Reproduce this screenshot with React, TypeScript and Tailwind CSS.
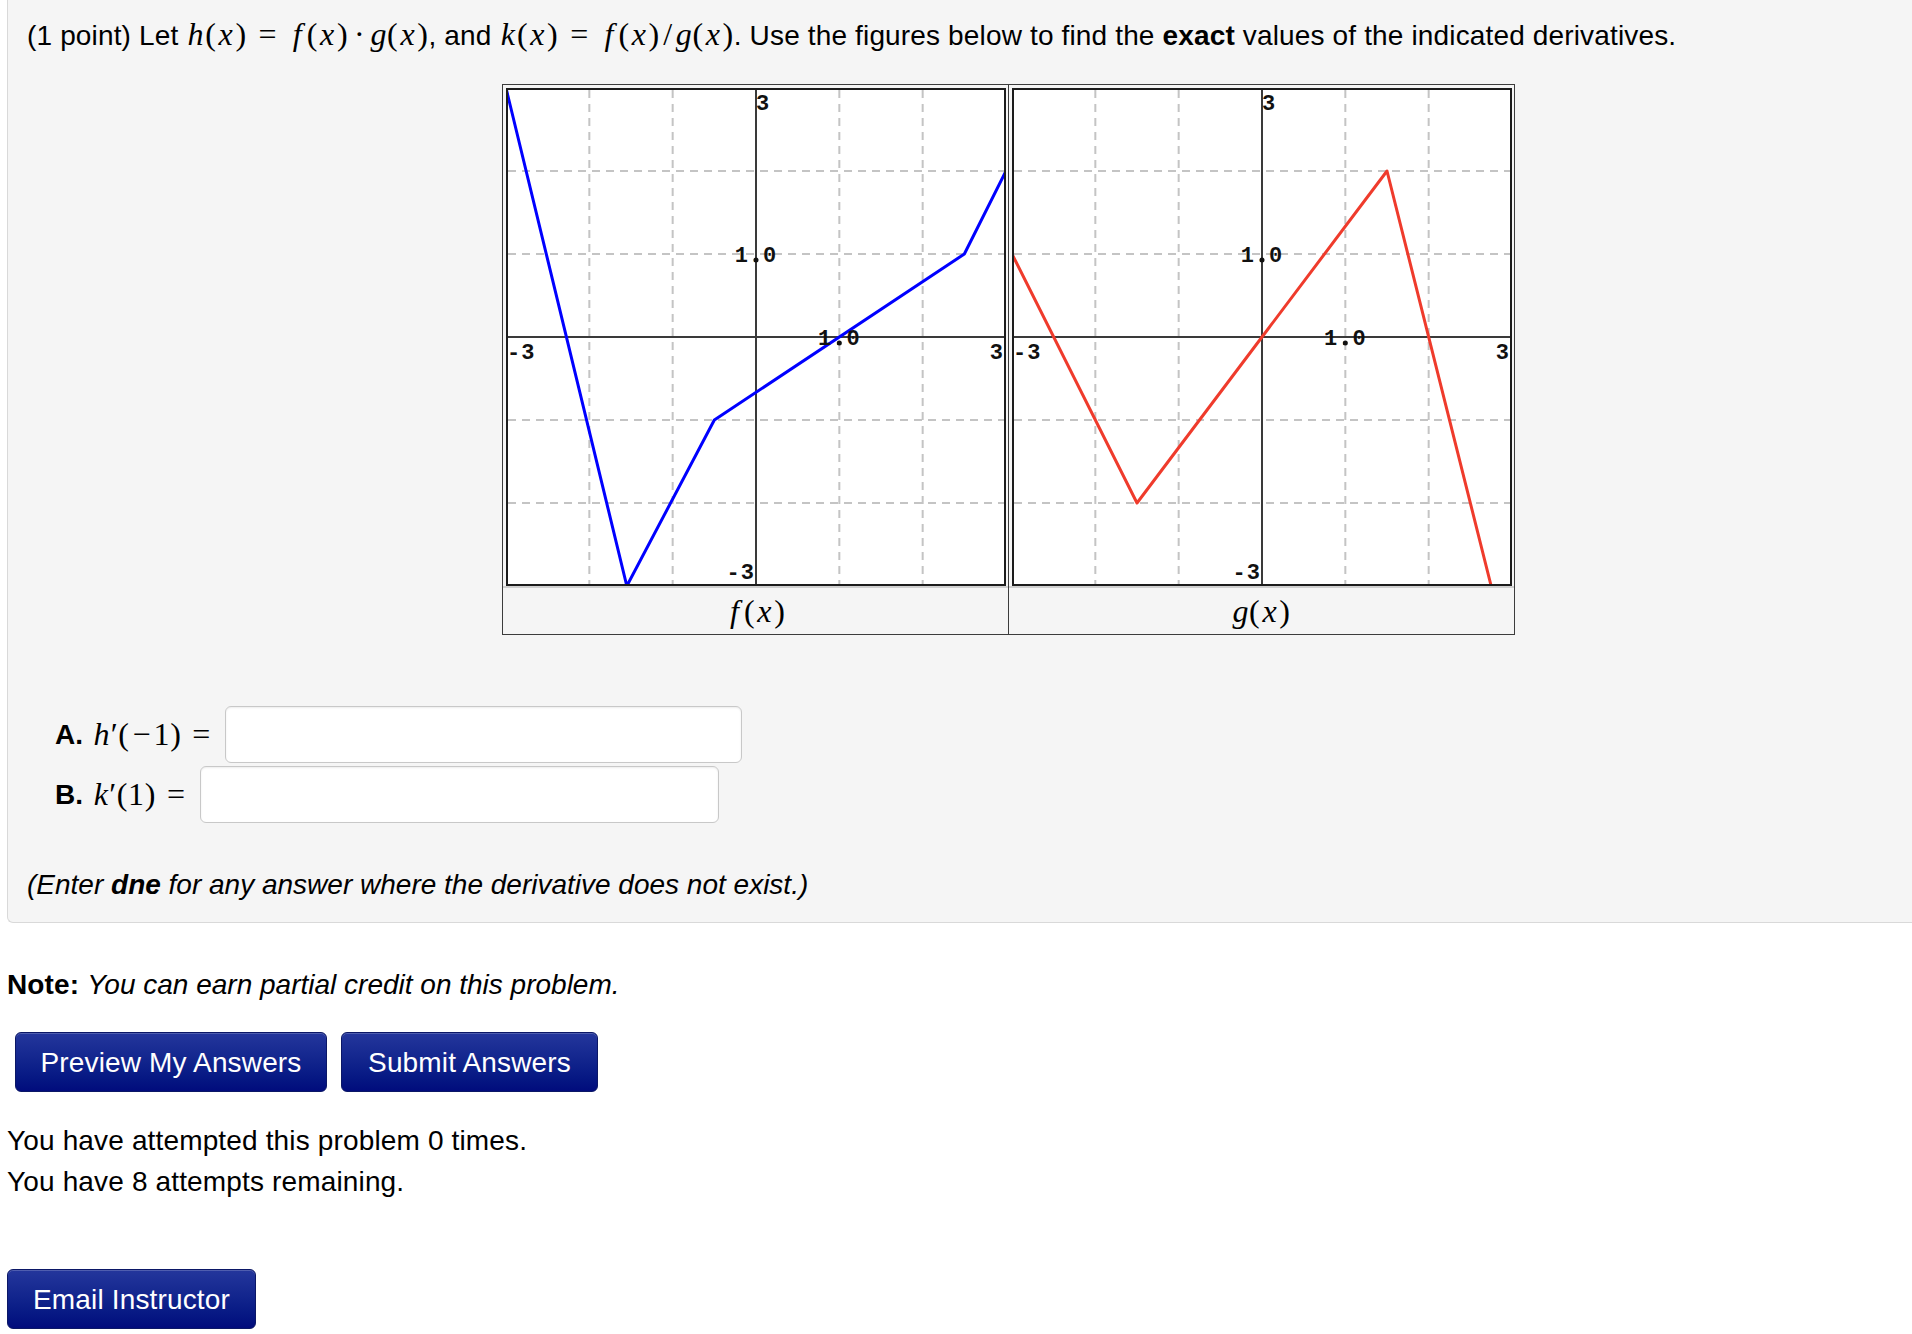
import React from 'react';

const W = 500;
const H = 498;
const sx = (x: number) => ((x + 3) / 6) * W;
const sy = (y: number) => ((3 - y) / 6) * H;

const fPts: [number, number][] = [[-3, 3], [-1.55, -3], [-0.5, -1], [2.5, 1], [3, 2]];
const gPts: [number, number][] = [[-3, 1], [-1.5, -2], [0, 0], [1.5, 2], [2.75, -3]];

// widths roughly like the TeX math fonts, so the formulas take the same room
const varWidth: Record<string, string> = {
  h: 'w-[0.576em]',
  x: 'w-[0.572em]',
  f: 'w-[0.56em]',
  g: 'w-[0.5em]',
  k: 'w-[0.53em]',
};

const Math = ({ children, className = '' }: { children: React.ReactNode; className?: string }) => (
  <span className={`font-['Liberation_Serif','Times_New_Roman',serif] text-[32px] tracking-normal ${className}`}>{children}</span>
);

const V = ({ c }: { c: string }) => <i className={`inline-block text-center ${varWidth[c]}`}>{c}</i>;
const L = () => <span className="inline-block w-[0.37em] text-center">(</span>;
const R = () => <span className="inline-block w-[0.37em] text-center">)</span>;
const Fx = ({ c }: { c: string }) => (
  <>
    <V c={c} />
    <L />
    <V c="x" />
    <R />
  </>
);
const Eq = () => <span className="inline-block w-[1.3em] text-center">=</span>;

const Plot = ({ pts, color }: { pts: [number, number][]; color: string }) => {
  const grid = [-2, -1, 1, 2];
  const ax = sx(0);
  const ay = sy(0);
  return (
    <svg width={W} height={H} viewBox={`0 0 ${W} ${H}`} className="block">
      <rect x={0} y={0} width={W} height={H} fill="white" />
      {grid.map((v) => (
        <line key={'v' + v} x1={sx(v)} y1={2} x2={sx(v)} y2={H - 2} stroke="#c4c4c4" strokeWidth={2} strokeDasharray="8 6" />
      ))}
      {grid.map((v) => (
        <line key={'h' + v} x1={2} y1={sy(v)} x2={W - 2} y2={sy(v)} stroke="#c4c4c4" strokeWidth={2} strokeDasharray="8 6" />
      ))}
      <line x1={ax} y1={0} x2={ax} y2={H} stroke="#3a3a3a" strokeWidth={2} />
      <line x1={0} y1={ay} x2={W} y2={ay} stroke="#3a3a3a" strokeWidth={2} />
      <polyline
        points={pts.map(([x, y]) => `${sx(x)},${sy(y)}`).join(' ')}
        fill="none"
        stroke={color}
        strokeWidth={3}
        strokeLinejoin="round"
      />
      <g fontFamily="'Liberation Mono', 'Courier New', monospace" fontWeight="bold" fontSize={22} letterSpacing={1} fill="#111">
        <text x={ax} y={22}>3</text>
        <text x={ax} y={sy(1) + 8} textAnchor="middle">1.0</text>
        <circle cx={ax} cy={sy(1) + 6} r={2.5} fill="#111" />
        <text x={sx(1)} y={ay + 8} textAnchor="middle">1.0</text>
        <circle cx={sx(1)} cy={ay + 6} r={2.5} fill="#111" />
        <text x={1} y={ay + 22}>-3</text>
        <text x={W - 2} y={ay + 22} textAnchor="end">3</text>
        <text x={ax - 1} y={H - 7} textAnchor="end">-3</text>
      </g>
      <rect x={1} y={1} width={W - 2} height={H - 2} fill="none" stroke="#1c1c1c" strokeWidth={2} />
    </svg>
  );
};

const Button = ({ children, className = '' }: { children: React.ReactNode; className?: string }) => (
  <button
    className={`flex h-[60px] items-center justify-center rounded-[6px] border border-[#0b1766] bg-gradient-to-b from-[#24369c] to-[#010b7c] text-white shadow-[inset_0_1px_0_rgba(255,255,255,0.2)] ${className}`}
  >
    {children}
  </button>
);

const inputCls =
  'ml-[12px] h-[57px] rounded-[6px] border border-[#c8c8c8] bg-white shadow-[inset_0_1px_2px_rgba(0,0,0,0.08)]';

export default function App() {
  return (
    <div className="min-h-[1334px] bg-white font-['Liberation_Sans',Arial,sans-serif] text-[28px] leading-[41px] tracking-[0.15px] text-black">
      <div className="ml-[7px] rounded-bl-[6px] border-b border-l border-[#d9d9d9] bg-[#f5f5f5] pb-[17px] pl-[19px] pt-[14px]">
        <p className="whitespace-nowrap">
          (1 point) Let{' '}
          <Math>
            <Fx c="h" />
            <Eq />
            <Fx c="f" />
            <span className="inline-block w-[0.7em] text-center">·</span>
            <Fx c="g" />
          </Math>
          , and{' '}
          <Math>
            <Fx c="k" />
            <Eq />
            <Fx c="f" />
            <span className="inline-block w-[0.5em] text-center">/</span>
            <Fx c="g" />
          </Math>
          . Use the figures below to find the <b>exact</b> values of the indicated derivatives.
        </p>

        <div className="ml-[475px] mt-[28px] flex w-[1013px] border border-[#3c3c3c]">
          <div className="flex w-[505px] flex-col">
            <div className="flex justify-center pt-[3px]">
              <Plot pts={fPts} color="#0000ff" />
            </div>
            <div className="h-[2px] bg-[#d0d0d0]" />
            <div className="flex h-[46px] items-center justify-center">
              <Math>
                <Fx c="f" />
              </Math>
            </div>
          </div>
          <div className="flex flex-1 flex-col border-l border-[#3c3c3c]">
            <div className="flex justify-center pt-[3px]">
              <Plot pts={gPts} color="#ef3b2c" />
            </div>
            <div className="h-[2px] bg-[#d0d0d0]" />
            <div className="flex h-[46px] items-center justify-center">
              <Math>
                <Fx c="g" />
              </Math>
            </div>
          </div>
        </div>

        <div className="mt-[71px] flex flex-col gap-[3px] pl-[28px]">
          <div className="flex items-center">
            <span className="font-bold">A.</span>
            <Math className="ml-[9px]">
              <V c="h" />′<L />
              <span className="inline-block w-[0.75em] text-center">−</span>1<R />
              <span className="ml-[0.25em] inline-block w-[0.75em] text-center">=</span>
            </Math>
            <input className={`${inputCls} w-[517px]`} />
          </div>
          <div className="flex items-center">
            <span className="font-bold">B.</span>
            <Math className="ml-[9px]">
              <V c="k" />′<L />1<R />
              <span className="ml-[0.25em] inline-block w-[0.75em] text-center">=</span>
            </Math>
            <input className={`${inputCls} w-[519px]`} />
          </div>
        </div>

        <p className="mt-[41px] italic tracking-normal">
          (Enter <b>dne</b> for any answer where the derivative does not exist.)
        </p>
      </div>

      <p className="mt-[41px] pl-[7px]">
        <b>Note:</b> <i className="tracking-normal">You can earn partial credit on this problem.</i>
      </p>

      <div className="ml-[15px] mt-[27px] flex gap-[14px]">
        <Button className="w-[312px]">Preview My Answers</Button>
        <Button className="w-[257px]">Submit Answers</Button>
      </div>

      <div className="mt-[28px] pl-[7px]">
        <p>You have attempted this problem 0 times.</p>
        <p>You have 8 attempts remaining.</p>
      </div>

      <Button className="ml-[7px] mt-[67px] w-[249px]">Email Instructor</Button>
    </div>
  );
}
